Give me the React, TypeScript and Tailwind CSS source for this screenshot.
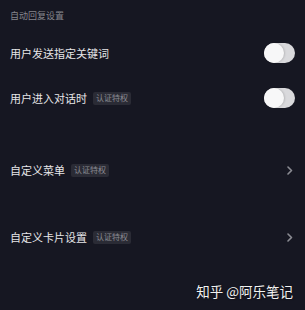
import React from 'react'

const font = { fontFamily: '"Noto Sans CJK SC", "Noto Sans", sans-serif' }

function Badge() {
  return (
    <span className="ml-[6px] flex h-[13px] items-center rounded-[2px] bg-[#2a2b35] px-[3px] text-[8px] leading-none text-[#8b8c93]">
      认证特权
    </span>
  )
}

function Toggle() {
  return (
    <div className="relative h-[20px] w-[31px] rounded-full bg-[#d9d9dc]">
      <div className="absolute left-0 top-0 h-[20px] w-[20px] rounded-full bg-[#f7f7f8] shadow-[1px_0_2px_rgba(0,0,0,0.15)]" />
    </div>
  )
}

function Chevron() {
  return (
    <svg width="6" height="9" viewBox="0 0 6 9" fill="none" className="mr-[2px]">
      <path d="M1 1l3.5 3.5L1 8" stroke="#8b8c93" strokeWidth="1.6" strokeLinecap="round" strokeLinejoin="round" />
    </svg>
  )
}

function Row({ label, badge, right, className }: {
  label: string
  badge?: boolean
  right: React.ReactNode
  className: string
}) {
  return (
    <div className={`flex items-center justify-between ${className}`}>
      <div className="flex items-center">
        <span className="text-[11px] leading-none text-[#e6e6e8]">{label}</span>
        {badge && <Badge />}
      </div>
      {right}
    </div>
  )
}

export default function App() {
  return (
    <div style={font} className="relative h-[310px] w-[305px] overflow-hidden bg-[#161722] pl-[10px] pr-[10px]">
      <div className="flex h-[30px] items-center pt-[1px] text-[9px] leading-none text-[#85868d]">
        自动回复设置
      </div>
      <Row className="h-[46px]" label="用户发送指定关键词" right={<Toggle />} />
      <Row className="h-[44px]" label="用户进入对话时" badge right={<Toggle />} />
      <Row className="mt-[28px] h-[44px]" label="自定义菜单" badge right={<Chevron />} />
      <Row className="mt-[23px] h-[44px]" label="自定义卡片设置" badge right={<Chevron />} />
      {/* watermark */}
      <div className="absolute bottom-[12px] right-[12px] text-[13.5px] leading-none text-[#f2f2f2] [text-shadow:0_0_2px_rgba(0,0,0,0.6)]">
        知乎 @阿乐笔记
      </div>
    </div>
  )
}
